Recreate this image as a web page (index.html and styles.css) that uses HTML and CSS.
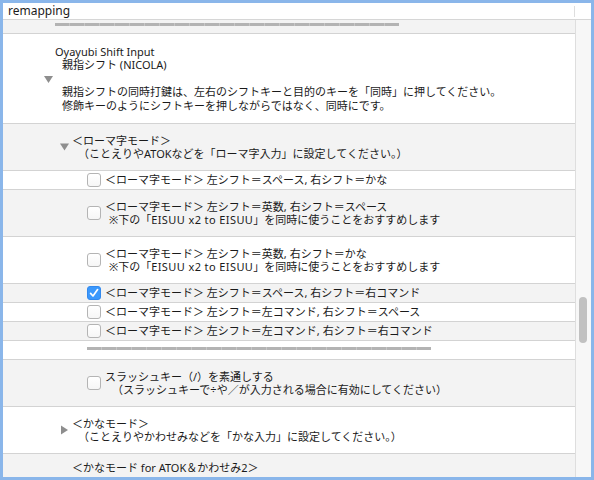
FILE: index.html
```html
<!DOCTYPE html>
<html lang="ja">
<head>
<meta charset="utf-8">
<title>remapping</title>
<link rel="stylesheet" href="styles.css">
</head>
<body>
<div class="window">
  <div class="search">
    <span class="query">remapping</span>
    <span class="search-divider"></span>
  </div>
  <div class="main">
    <div class="list">
      <div class="rows">
        <div class="row one alt sep sep-l1"><div class="bar"></div></div>

        <div class="row big lvl0">
          <span class="disclosure"><svg width="12" height="12" viewBox="0 0 12 12"><polygon points="1,3 10,3 5.5,10" fill="#8e8e8e"/></svg></span>
          <div class="text">
            <div>Oyayubi Shift Input</div>
            <div class="ind7">親指シフト (NICOLA)</div>
            <div>&nbsp;</div>
            <div class="ind7">親指シフトの同時打鍵は、左右のシフトキーと目的のキーを「同時」に押してください。</div>
            <div class="ind7">修飾キーのようにシフトキーを押しながらではなく、同時にです。</div>
          </div>
        </div>

        <div class="row two alt lvl1">
          <span class="disclosure"><svg width="12" height="12" viewBox="0 0 12 12"><polygon points="1,2.5 10,2.5 5.5,9.5" fill="#8e8e8e"/></svg></span>
          <div class="text">
            <div>＜ローマ字モード＞</div>
            <div class="ind6">（ことえりやATOKなどを「ローマ字入力」に設定してください。）</div>
          </div>
        </div>

        <div class="row one lvl2">
          <span class="checkbox"></span>
          <div class="text">＜ローマ字モード＞ 左シフト＝スペース, 右シフト＝かな</div>
        </div>

        <div class="row two alt lvl2">
          <span class="checkbox"></span>
          <div class="text">
            <div>＜ローマ字モード＞ 左シフト＝英数, 右シフト＝スペース</div>
            <div class="ind4">※下の「<span class="latin-wide">EISUU x2 to EISUU</span>」を同時に使うことをおすすめします</div>
          </div>
        </div>

        <div class="row two lvl2">
          <span class="checkbox"></span>
          <div class="text">
            <div>＜ローマ字モード＞ 左シフト＝英数, 右シフト＝かな</div>
            <div class="ind4">※下の「<span class="latin-wide">EISUU x2 to EISUU</span>」を同時に使うことをおすすめします</div>
          </div>
        </div>

        <div class="row one alt lvl2">
          <span class="checkbox checked"><svg width="14" height="14" viewBox="0 0 14 14"><path d="M3.6 7.4 L6 10 L10.6 3.6" fill="none" stroke="#fff" stroke-width="1.7" stroke-linecap="round" stroke-linejoin="round"/></svg></span>
          <div class="text">＜ローマ字モード＞ 左シフト＝スペース, 右シフト＝右コマンド</div>
        </div>

        <div class="row one lvl2">
          <span class="checkbox"></span>
          <div class="text">＜ローマ字モード＞ 左シフト＝左コマンド, 右シフト＝スペース</div>
        </div>

        <div class="row one alt lvl2">
          <span class="checkbox"></span>
          <div class="text">＜ローマ字モード＞ 左シフト＝左コマンド, 右シフト＝右コマンド</div>
        </div>

        <div class="row one sep sep-l3"><div class="bar"></div></div>

        <div class="row two alt lvl2">
          <span class="checkbox"></span>
          <div class="text">
            <div>スラッシュキー（/）を素通しする</div>
            <div class="ind7">（スラッシュキーで÷や／が入力される場合に有効にしてください）</div>
          </div>
        </div>

        <div class="row two lvl1">
          <span class="disclosure"><svg width="12" height="12" viewBox="0 0 12 12"><polygon points="2,1.5 9,6 2,10.5" fill="#8e8e8e"/></svg></span>
          <div class="text">
            <div>＜かなモード＞</div>
            <div class="ind6">（ことえりやかわせみなどを「かな入力」に設定してください。）</div>
          </div>
        </div>

        <div class="row two alt lvl1 top">
          <span class="disclosure-space"></span>
          <div class="text">
            <div>＜かなモード for ATOK＆かわせみ2＞</div>
          </div>
        </div>
      </div>
    </div>
    <div class="scrollbar"><div class="thumb"></div></div>
  </div>
</div>
</body>
</html>
```

FILE: styles.css
```css
html, body {
  margin: 0;
  padding: 0;
}

body {
  background: #8ab6ea;
  width: 594px;
  height: 480px;
  overflow: hidden;
  font-family: "Noto Sans", "Noto Sans CJK JP", sans-serif;
  color: #1a1a1a;
}

.window {
  margin: 3px;
  width: 588px;
  height: 474px;
  background: #fff;
  display: flex;
  flex-direction: column;
  overflow: hidden;
}

.search {
  height: 16px;
  border-bottom: 1px solid #d6d6d6;
  display: flex;
  align-items: center;
  padding-left: 5px;
}

.query {
  font-size: 12px;
  line-height: 16px;
  color: #1c1c1c;
}

.search-divider {
  margin-left: auto;
  margin-right: 16px;
  width: 1px;
  height: 11px;
  background: #dedede;
}

.main {
  flex: 1;
  display: flex;
  min-height: 0;
}

.list {
  width: 572px;
  overflow: hidden;
}

.rows {
  margin-top: -5px;
}

.row {
  display: flex;
  align-items: center;
  border-bottom: 1px solid #d3d3d3;
  background: #fff;
  font-size: 11px;
  line-height: 13.5px;
  white-space: nowrap;
}

.row.alt {
  background: #f3f3f3;
}

.row.one { height: 18px; }
.row.two { height: 46px; }
.row.big { height: 89px; }

.row.top {
  align-items: flex-start;
  padding-top: 7px;
  height: 39px;
}

.row.lvl0 { padding-left: 40px; }
.row.lvl1 { padding-left: 56px; }
.row.lvl2 { padding-left: 84px; }

.disclosure, .disclosure-space {
  width: 12px;
  height: 12px;
  flex: none;
  display: flex;
}

.lvl1 .disclosure, .lvl1 .disclosure-space {
  margin-right: 1px;
}

.checkbox {
  width: 12px;
  height: 12px;
  flex: none;
  border: 1px solid #b4b4b4;
  border-radius: 3px;
  background: linear-gradient(#ffffff, #f6f6f6);
  margin-right: 4px;
  display: flex;
}

.checkbox.checked {
  background: #3b98fc;
  border-color: #3289ee;
}

.checkbox.checked svg {
  margin: -1px;
}

.latin-wide {
  letter-spacing: 0.4px;
}

.ind4 { padding-left: 4px; }
.ind6 { padding-left: 6px; }
.ind7 { padding-left: 7px; }

.row.sep {
  align-items: flex-start;
}

.sep-l1 .bar { margin-left: 52px; margin-top: 8px; }
.sep-l3 .bar { margin-left: 84px; margin-top: 6px; }

.bar {
  width: 344px;
  height: 3px;
  background: repeating-linear-gradient(90deg, #b3b3b3 0 14px, #c6c6c6 14px 15px);
}

.scrollbar {
  width: 15px;
  border-left: 1px solid #dedede;
  background: #f7f7f7;
}

.thumb {
  margin-top: 277px;
  margin-left: 3px;
  width: 8px;
  height: 46px;
  border-radius: 4px;
  background: #c1c1c1;
}
```
